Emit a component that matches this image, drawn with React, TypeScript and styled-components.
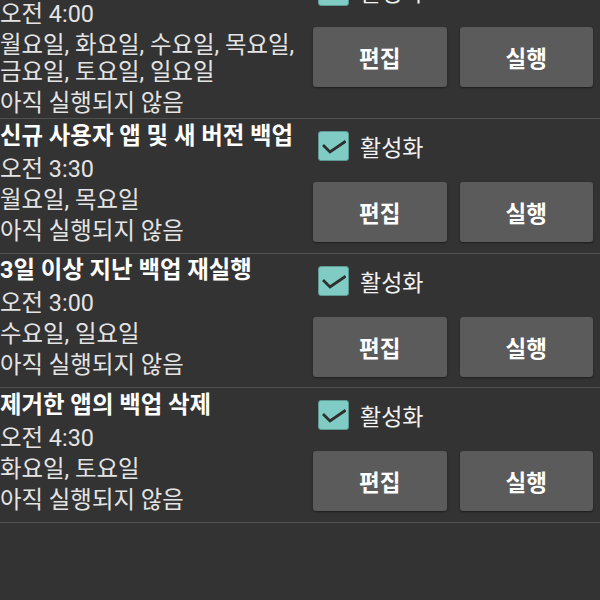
import React, { useLayoutEffect, useRef } from "react";
import styled, { createGlobalStyle } from "styled-components";

const GlobalStyle = createGlobalStyle`
  html, body {
    margin: 0;
    padding: 0;
    background: #333333;
  }
  body {
    font-family: Roboto, "Noto Sans CJK KR", sans-serif;
    color: #e4e4e4;
  }
  * { box-sizing: border-box; }
`;

const ScrollArea = styled.div`
  height: 600px;
  overflow-y: auto;
  scrollbar-width: none;
  &::-webkit-scrollbar { display: none; }
`;

const List = styled.div`
  display: flex;
  flex-direction: column;
  padding-bottom: 200px;
`;

const Row = styled.div`
  display: flex;
  align-items: flex-start;
  border-bottom: 1px solid #505050;
`;

const Info = styled.div`
  flex: 1;
  min-width: 0;
  padding: 2.5px 0 1.5px 0;
  display: flex;
  flex-direction: column;
  gap: 4px;
`;

const Title = styled.div`
  font-size: 23.4px;
  line-height: 29px;
  font-weight: 700;
  color: #ffffff;
  margin-bottom: 1px;
  white-space: nowrap;
`;

const Line = styled.div`
  font-size: 23.4px;
  line-height: 27px;
  color: #e4e4e4;
  word-break: keep-all;
`;

const Controls = styled.div`
  width: 280px;
  margin-right: 7px;
  padding: 12px 0 10.6px 0;
  display: flex;
  flex-direction: column;
  gap: 21px;
`;

const Toggle = styled.label`
  display: flex;
  align-items: center;
  gap: 11px;
  padding-left: 5px;
  height: 30px;
`;

const Box = styled.span`
  width: 31px;
  height: 30px;
  border-radius: 3px;
  background: #80cbc4;
  border: 1px solid #5d9892;
  display: flex;
  align-items: center;
  justify-content: center;
`;

const ToggleLabel = styled.span`
  font-size: 23px;
  color: #f2f2f2;
`;

const Buttons = styled.div`
  display: grid;
  grid-template-columns: 1fr 1fr;
  gap: 13px;
`;

const Btn = styled.button`
  height: 60px;
  border: none;
  border-radius: 3px;
  background: #5b5b5b;
  box-shadow: 0 1px 2px rgba(0, 0, 0, 0.45);
  color: #ffffff;
  font-family: Roboto, "Noto Sans CJK KR", sans-serif;
  font-size: 22.5px;
  font-weight: 700;
  padding: 0;
`;

type Schedule = {
  title: string;
  time: string;
  days: string;
  status: string;
};

const schedules: Schedule[] = [
  { title: "전체 앱 백업", time: "오전 4:00", days: "월요일, 화요일, 수요일, 목요일, 금요일, 토요일, 일요일", status: "아직 실행되지 않음" },
  { title: "신규 사용자 앱 및 새 버전 백업", time: "오전 3:30", days: "월요일, 목요일", status: "아직 실행되지 않음" },
  { title: "3일 이상 지난 백업 재실행", time: "오전 3:00", days: "수요일, 일요일", status: "아직 실행되지 않음" },
  { title: "제거한 앱의 백업 삭제", time: "오전 4:30", days: "화요일, 토요일", status: "아직 실행되지 않음" },
];

const Check = () => (
  <svg width="24" height="24" viewBox="0 0 24 24">
    <path d="M2 12 L8 18 L22.5 8" fill="none" stroke="#2e2e2e" strokeWidth="2.8" strokeLinecap="square" />
  </svg>
);

export default function App() {
  const ref = useRef<HTMLDivElement>(null);
  useLayoutEffect(() => {
    if (ref.current) ref.current.scrollTop = 36;
  }, []);
  return (
    <>
      <GlobalStyle />
      <ScrollArea ref={ref}>
        <List>
          {schedules.map((s) => (
            <Row key={s.title}>
              <Info>
                <Title>{s.title}</Title>
                <Line>{s.time}</Line>
                <Line>{s.days}</Line>
                <Line>{s.status}</Line>
              </Info>
              <Controls>
                <Toggle>
                  <Box><Check /></Box>
                  <ToggleLabel>활성화</ToggleLabel>
                </Toggle>
                <Buttons>
                  <Btn>편집</Btn>
                  <Btn>실행</Btn>
                </Buttons>
              </Controls>
            </Row>
          ))}
        </List>
      </ScrollArea>
    </>
  );
}
